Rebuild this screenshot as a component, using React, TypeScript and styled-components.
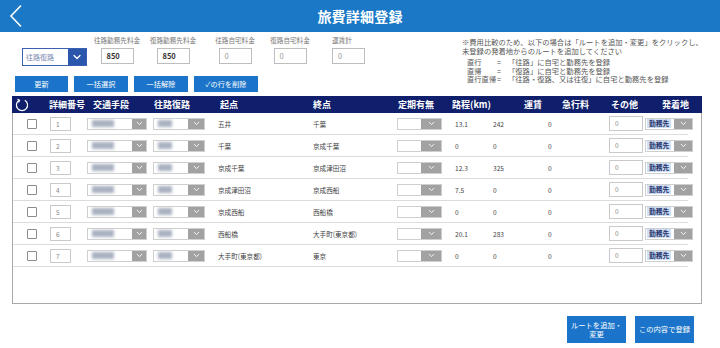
import styled, { createGlobalStyle } from 'styled-components';
import { ChevronDown } from 'lucide-react';

interface Route {
  no: number;
  from: string;
  to: string;
  km: string;
  fare: string;
}

const routes: Route[] = [
  { no: 1, from: '五井', to: '千葉', km: '13.1', fare: '242' },
  { no: 2, from: '千葉', to: '京成千葉', km: '0', fare: '0' },
  { no: 3, from: '京成千葉', to: '京成津田沼', km: '12.3', fare: '325' },
  { no: 4, from: '京成津田沼', to: '京成西船', km: '7.5', fare: '0' },
  { no: 5, from: '京成西船', to: '西船橋', km: '0', fare: '0' },
  { no: 6, from: '西船橋', to: '大手町(東京都)', km: '20.1', fare: '283' },
  { no: 7, from: '大手町(東京都)', to: '東京', km: '0', fare: '0' },
];

const fees = [
  { label: '往路勤務先料金', value: '850', offset: 5, strong: true },
  { label: '復路勤務先料金', value: '850', offset: 6, strong: true },
  { label: '往路自宅料金', value: '0', offset: 12, strong: false },
  { label: '復路自宅料金', value: '0', offset: 5, strong: false },
];

const HEAD_COLS = '36px 44px 61px 66px 93px 85px 54px 72px 38px 49px 51px 1fr';
const ROW_COLS = '35px 37px 66px 65px 95px 84px 58px 38px 55px 61px 36px 45px';

export default function App() {
  return (
    <>
      <GlobalStyle />
      <Page>
        <TitleBar>
          <BackButton>
            <svg width="14" height="24" viewBox="0 0 14 24">
              <polyline points="12,1.5 2,12 12,22.5" fill="none" stroke="#fff" strokeWidth="1.6" />
            </svg>
          </BackButton>
          <Title>旅費詳細登録</Title>
          <span />
        </TitleBar>

        <Top>
          <Controls>
            <FieldRow>
              <Dropdown>
                <DropdownText>往路復路</DropdownText>
                <DropdownChevron>
                  <ChevronDown size={12} color="#fff" strokeWidth={2.6} />
                </DropdownChevron>
              </Dropdown>
              {fees.map((f) => (
                <FeeGroup key={f.label} $offset={f.offset}>
                  <FeeLabel>{f.label}</FeeLabel>
                  <FeeInput $strong={f.strong}>{f.value}</FeeInput>
                </FeeGroup>
              ))}
              <FeeGroup $offset={17} $start>
                <FeeLabel>運賃計</FeeLabel>
                <FeeInput $strong={false}>0</FeeInput>
              </FeeGroup>
            </FieldRow>
            <ActionRow>
              <ActionButton $w={53}>更新</ActionButton>
              <ActionButton $w={54}>一括選択</ActionButton>
              <ActionButton $w={54}>一括解除</ActionButton>
              <ActionButton $w={64}>✓の行を削除</ActionButton>
            </ActionRow>
          </Controls>
          <Notes>
            <NoteLine>※費用比較のため、以下の場合は「ルートを追加・変更」をクリックし、</NoteLine>
            <NoteLine>未登録の発着地からのルートを追加してください</NoteLine>
            <NoteGrid>
              <span>直行</span><span>=</span><span>「往路」に自宅と勤務先を登録</span>
              <span>直帰</span><span>=</span><span>「復路」に自宅と勤務先を登録</span>
              <span>直行直帰</span><span>=</span><span>「往路・復路、又は往復」に自宅と勤務先を登録</span>
            </NoteGrid>
          </Notes>
        </Top>

        <TableFrame>
          <HeadRow $cols={HEAD_COLS}>
            <HeadCell>
              <svg width="14" height="14" viewBox="0 0 14 14">
                <path d="M4.2 2.2 A5.6 5.6 0 1 0 9.8 2.2" fill="none" stroke="#fff" strokeWidth="1.2" />
                <polyline points="2.4,1.2 4.6,2.2 3.6,4.4" fill="none" stroke="#fff" strokeWidth="1.1" />
              </svg>
            </HeadCell>
            <HeadCell>詳細番号</HeadCell>
            <HeadCell>交通手段</HeadCell>
            <HeadCell>往路復路</HeadCell>
            <HeadCell>起点</HeadCell>
            <HeadCell>終点</HeadCell>
            <HeadCell>定期有無</HeadCell>
            <HeadCell>路程(km)</HeadCell>
            <HeadCell>運賃</HeadCell>
            <HeadCell>急行料</HeadCell>
            <HeadCell>その他</HeadCell>
            <HeadCell>発着地</HeadCell>
          </HeadRow>
          {routes.map((r) => (
            <BodyRow key={r.no} $cols={ROW_COLS}>
              <CheckCell>
                <CheckBox />
              </CheckCell>
              <Cell>
                <SmallInput $w={21} $h={14}>{r.no}</SmallInput>
              </Cell>
              <Cell>
                <Select $w={60} $chev={14}>
                  <Blurred $w={22} />
                </Select>
              </Cell>
              <Cell>
                <Select $w={52} $chev={16}>
                  <Blurred $w={14} />
                </Select>
              </Cell>
              <Cell>{r.from}</Cell>
              <Cell>{r.to}</Cell>
              <Cell>
                <Select $w={45} $chev={20} />
              </Cell>
              <Cell>{r.km}</Cell>
              <Cell>{r.fare}</Cell>
              <Cell>0</Cell>
              <Cell>
                <SmallInput $w={34} $h={15}>0</SmallInput>
              </Cell>
              <Cell>
                <Select $w={48} $chev={18}>
                  <PlaceTag>勤務先</PlaceTag>
                </Select>
              </Cell>
            </BodyRow>
          ))}
        </TableFrame>

        <Footer>
          <FooterButton>
            ルートを追加・
            <br />
            変更
          </FooterButton>
          <FooterButton>この内容で登録</FooterButton>
        </Footer>
      </Page>
    </>
  );
}

function Select({ $w, $chev, children }: { $w: number; $chev: number; children?: React.ReactNode }) {
  return (
    <SelectBox $w={$w}>
      <SelectBody>{children}</SelectBody>
      <SelectChevron $w={$chev}>
        <ChevronDown size={9} color="#fff" strokeWidth={2.4} />
      </SelectChevron>
    </SelectBox>
  );
}

const GlobalStyle = createGlobalStyle`
  body {
    margin: 0;
    background: #fff;
    font-family: "Noto Sans CJK JP", "Noto Sans", sans-serif;
  }
`;

const Page = styled.div`
  width: 720px;
  height: 348px;
  overflow: hidden;
`;

const TitleBar = styled.header`
  height: 32px;
  background: #1a78c6;
  display: grid;
  grid-template-columns: 40px 1fr 40px;
  align-items: center;
`;

const BackButton = styled.div`
  display: flex;
  align-items: center;
  padding-left: 9px;
  height: 32px;
`;

const Title = styled.h1`
  margin: 0;
  text-align: center;
  color: #fff;
  font-size: 14px;
  font-weight: 700;
  letter-spacing: 0.2px;
`;

const Top = styled.section`
  display: flex;
  height: 64px;
  padding-left: 15px;
`;

const Controls = styled.div`
  flex: 0 0 447px;
  padding-top: 4px;
`;

const FieldRow = styled.div`
  display: flex;
  align-items: flex-start;
  height: 30px;
`;

const Dropdown = styled.div`
  margin: 12px 0 0 7px;
  width: 65px;
  height: 18px;
  box-sizing: border-box;
  border: 1px solid #3b60b3;
  display: flex;
  background: #fff;
`;

const DropdownText = styled.span`
  flex: 1;
  font-size: 7px;
  color: #7786b0;
  line-height: 16px;
  padding-left: 3px;
`;

const DropdownChevron = styled.span`
  width: 18px;
  background: #2a56ab;
  display: flex;
  align-items: center;
  justify-content: center;
`;

const FeeGroup = styled.div<{ $offset: number; $start?: boolean }>`
  margin-left: ${(p) => p.$offset}px;
  width: 50px;
  display: flex;
  flex-direction: column;
  align-items: ${(p) => (p.$start ? 'flex-start' : 'center')};
  gap: 4px;
`;

const FeeLabel = styled.span`
  font-size: 6.6px;
  line-height: 8px;
  color: #777;
  white-space: nowrap;
`;

const FeeInput = styled.div<{ $strong: boolean }>`
  width: 33px;
  height: 16px;
  box-sizing: border-box;
  border: 1px solid #bdbdbd;
  padding-left: 5px;
  font-size: 7.5px;
  line-height: 14px;
  font-weight: ${(p) => (p.$strong ? 700 : 400)};
  color: ${(p) => (p.$strong ? '#333' : '#999')};
`;

const ActionRow = styled.div`
  display: flex;
  gap: 6px;
  margin-top: 10px;
`;

const ActionButton = styled.button<{ $w: number }>`
  width: ${(p) => p.$w}px;
  height: 16px;
  padding: 0;
  border: none;
  background: #1b74c9;
  color: #fff;
  font-family: inherit;
  font-size: 7.2px;
`;

const Notes = styled.div`
  padding-top: 6px;
  font-size: 7.3px;
  line-height: 9px;
  color: #555;
`;

const NoteLine = styled.div`
  white-space: nowrap;
`;

const NoteGrid = styled.div`
  display: grid;
  grid-template-columns: 30px 11px auto;
  margin: 2px 0 0 5px;
  line-height: 8.5px;
  white-space: nowrap;
`;

const TableFrame = styled.div`
  margin: 0 18px 0 12px;
  height: 208px;
  box-sizing: border-box;
  border: 1px solid #a9a9a9;
  border-top: none;
`;

const HeadRow = styled.div<{ $cols: string }>`
  display: grid;
  grid-template-columns: ${(p) => p.$cols};
  height: 17px;
  margin: 0 -1px;
  padding-left: 1px;
  align-items: center;
  background: #0f1f6c;
`;

const HeadCell = styled.div`
  color: #fff;
  font-size: 9px;
  font-weight: 700;
  white-space: nowrap;
  display: flex;
  align-items: center;

  &:first-child {
    padding-left: 2px;
  }
`;

const BodyRow = styled.div<{ $cols: string }>`
  display: grid;
  grid-template-columns: ${(p) => p.$cols};
  width: 675px;
  height: 21px;
  align-items: center;
  border-bottom: 1px solid #dcdcdc;
`;

const Cell = styled.div`
  padding-left: 2px;
  font-size: 6.6px;
  color: #444;
  white-space: nowrap;
`;

const CheckCell = styled.div`
  padding-left: 14px;
  display: flex;
`;

const CheckBox = styled.span`
  width: 10px;
  height: 10px;
  box-sizing: border-box;
  border: 1px solid #8c8c8c;
  border-radius: 1px;
  background: #fff;
`;

const SmallInput = styled.div<{ $w: number; $h: number }>`
  width: ${(p) => p.$w}px;
  height: ${(p) => p.$h}px;
  box-sizing: border-box;
  border: 1px solid #c9c9c9;
  padding-left: 5px;
  font-size: 6.5px;
  line-height: ${(p) => p.$h - 2}px;
  color: #888;
`;

const SelectBox = styled.div<{ $w: number }>`
  width: ${(p) => p.$w}px;
  height: 12px;
  box-sizing: border-box;
  border: 1px solid #cfcfcf;
  display: flex;
  background: #fff;
`;

const SelectBody = styled.div`
  flex: 1;
  display: flex;
  align-items: center;
  padding-left: 1px;
  overflow: hidden;
`;

const SelectChevron = styled.div<{ $w: number }>`
  width: ${(p) => p.$w}px;
  background: #a2a2a2;
  display: flex;
  align-items: center;
  justify-content: center;
`;

const Blurred = styled.span<{ $w: number }>`
  width: ${(p) => p.$w}px;
  height: 7px;
  margin-left: 3px;
  background: #a9b1c0;
  filter: blur(1.6px);
`;

const PlaceTag = styled.span`
  background: #cfe0f4;
  color: #1d2f6a;
  font-size: 6.8px;
  font-weight: 700;
  line-height: 9px;
  padding: 0 2px;
`;

const Footer = styled.div`
  display: flex;
  justify-content: flex-end;
  gap: 9px;
  margin-top: 12px;
  padding-right: 26px;
`;

const FooterButton = styled.button`
  width: 59px;
  height: 27px;
  padding: 0;
  border: none;
  background: #1b74c9;
  color: #fff;
  font-family: inherit;
  font-size: 7.3px;
  line-height: 9px;
`;
